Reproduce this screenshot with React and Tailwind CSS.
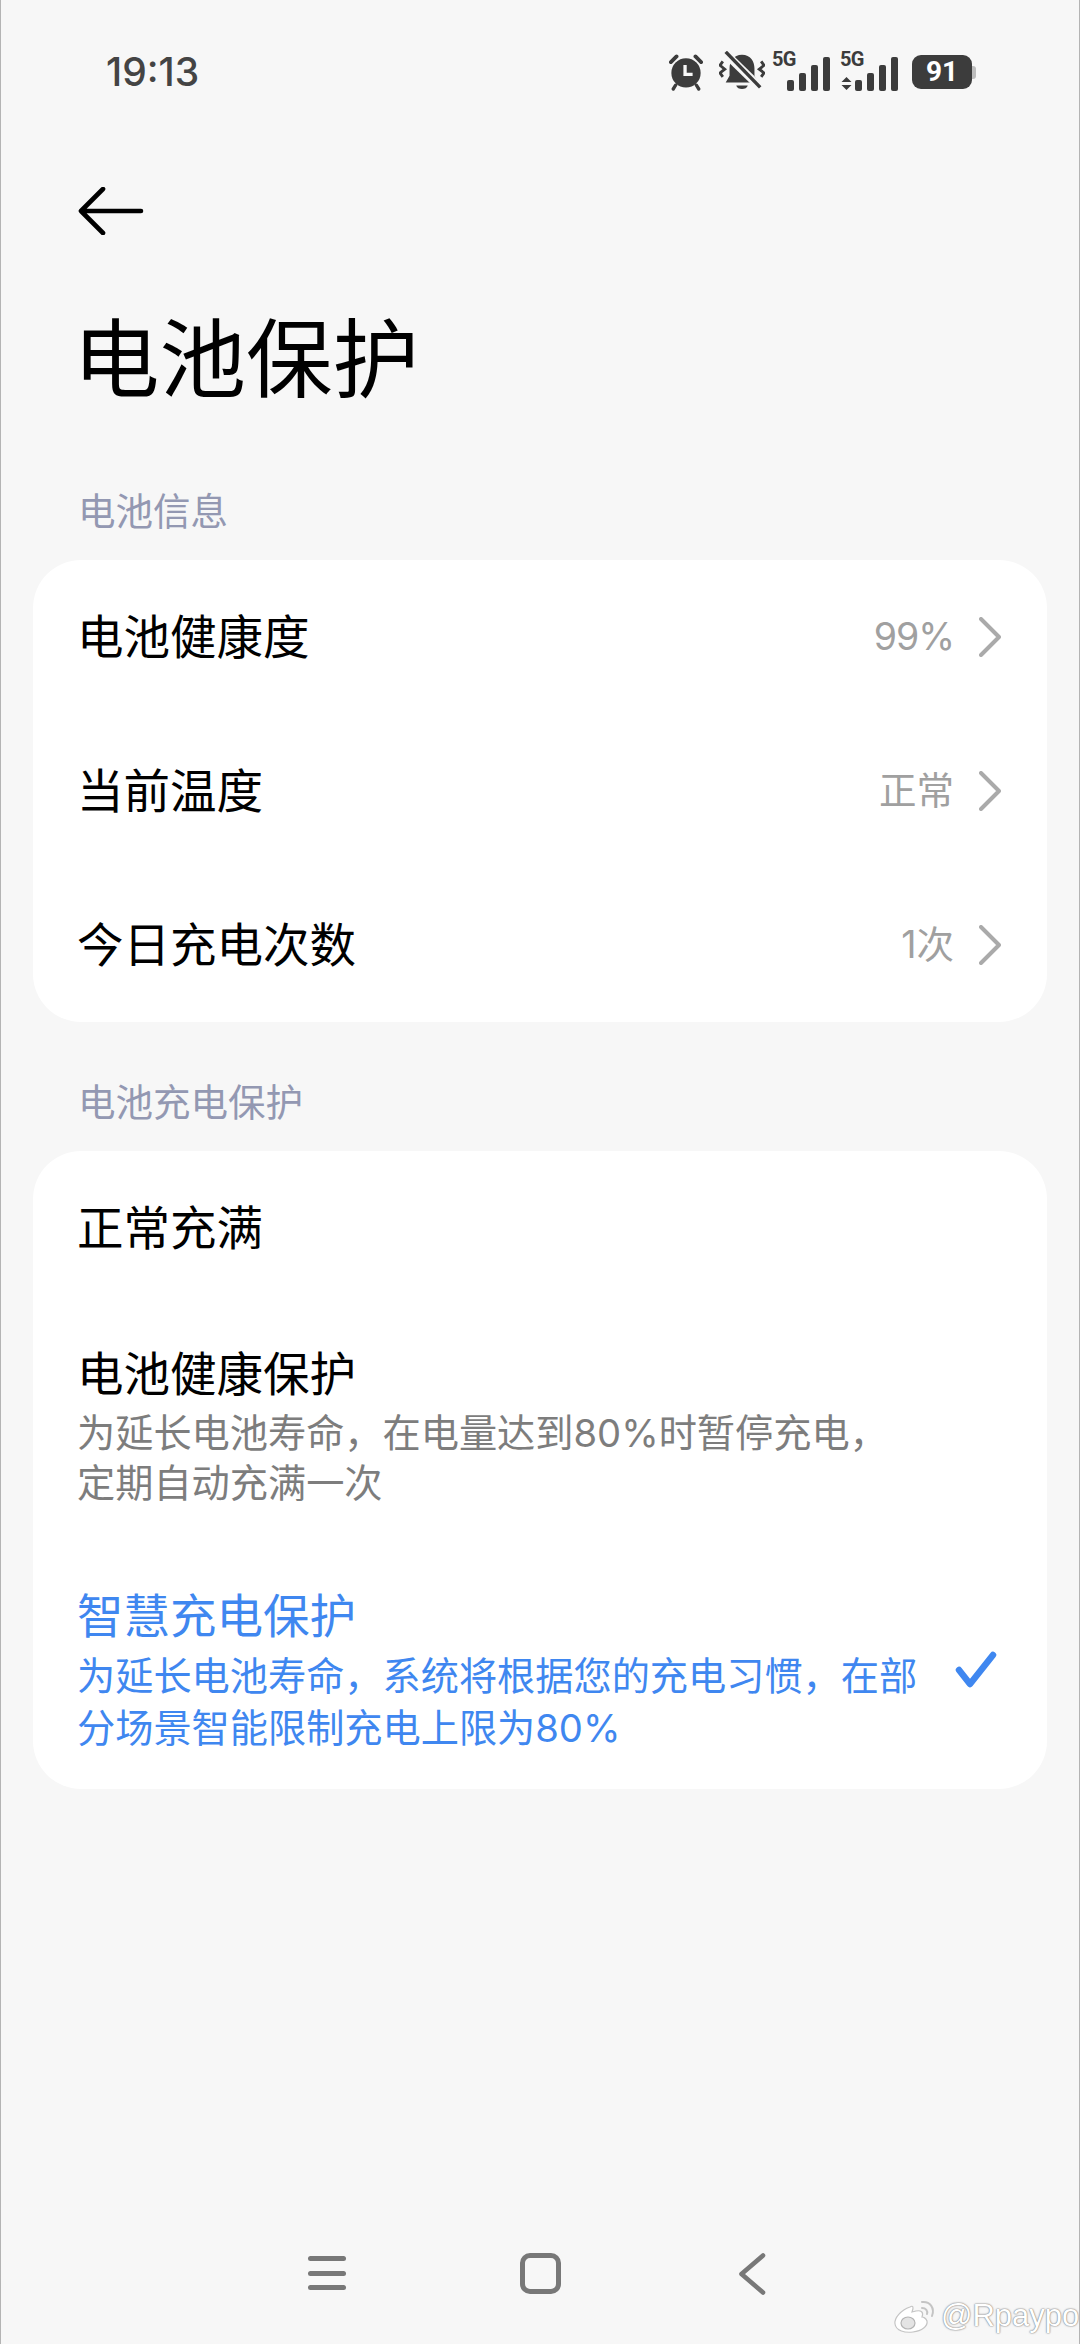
const FONT = "font-['Inter','Noto_Sans_CJK_SC',sans-serif]";

function Alarm() {
  return (
    <svg width="34" height="38" viewBox="0 0 36 40" className="text-[#3c3c3c]">
      <circle cx="18" cy="21" r="15.5" fill="currentColor" />
      <path d="M2 9.5 L8 3.5 M28 3.5 L34 9.5" stroke="currentColor" strokeWidth="4" strokeLinecap="round" />
      <path d="M7 34 L4.5 38 M29 34 L31.5 38" stroke="currentColor" strokeWidth="3.5" strokeLinecap="round" />
      <path d="M17 12.5 V22.5 H25" fill="none" stroke="#f7f7f7" strokeWidth="3.5" />
    </svg>
  );
}

function MutedBell() {
  return (
    <svg width="46" height="42" viewBox="0 0 48 42" className="text-[#3c3c3c]">
      <path d="M24 3 C15 3 11 10 11 17 V25 L7 32 H41 L37 25 V17 C37 10 33 3 24 3Z" fill="currentColor" />
      <path d="M18 35 H30 C29 40 19 40 18 35Z" fill="currentColor" />
      <path d="M6 1 L43 37" stroke="#f7f7f7" strokeWidth="8.5" />
      <path d="M7 0 L43 37" stroke="currentColor" strokeWidth="3.6" />
      <path d="M4 10 L1 14 L6 18 L1 22 L4 26 M44 10 L47 14 L42 18 L47 22 L44 26" fill="none" stroke="currentColor" strokeWidth="3" />
    </svg>
  );
}

function Signal({ arrows, className }) {
  return (
    <div className={`relative w-[58px] h-[38px] ${className}`}>
      <span className="absolute left-0 top-[-4px] text-[20px] leading-[20px] font-bold tracking-[-0.6px] text-[#3c3c3c] font-['Roboto',sans-serif]">5G</span>
      <div className="absolute right-0 bottom-0 flex items-end gap-[5px]">
        <div className="w-[7px] h-[11px] rounded-[2px] bg-[#3c3c3c]" />
        <div className="w-[7px] h-[18px] rounded-[2px] bg-[#3c3c3c]" />
        <div className="w-[7px] h-[26px] rounded-[2px] bg-[#3c3c3c]" />
        <div className="w-[7px] h-[34px] rounded-[2px] bg-[#3c3c3c]" />
      </div>
      {arrows && (
        <svg width="11" height="13" viewBox="0 0 11 13" className="absolute left-[1px] bottom-[1px] text-[#3c3c3c]">
          <path d="M5.5 0 L10.5 5 H0.5Z M5.5 13 L10.5 8 H0.5Z" fill="currentColor" />
        </svg>
      )}
    </div>
  );
}

function StatusBar() {
  return (
    <div className="h-[144px] flex items-center justify-between pl-[105px] pr-[103px]">
      <span className="text-[39px] font-medium text-[#444444] font-['Inter',sans-serif]">19:13</span>
      <div className="flex items-center">
        <Alarm />
        <div className="ml-[16px]"><MutedBell /></div>
        <Signal className="ml-[7px]" />
        <Signal arrows className="ml-[10px]" />
        <div className="ml-[14px] flex items-center">
          <div className="w-[60px] h-[34px] rounded-[9px] bg-[#3c3c3c] text-white flex items-center justify-center text-[28px] font-bold font-['Roboto',sans-serif]">91</div>
          <div className="w-[4px] h-[13px] rounded-r-[3px] bg-[#bdbdbd]" />
        </div>
      </div>
    </div>
  );
}

function SectionLabel({ children, className }) {
  return (
    <div className={`h-[50px] leading-[50px] pl-[77px] text-[37.5px] text-[#9398b2] mb-[23px] ${className}`}>{children}</div>
  );
}

function InfoRow({ label, value, tight }) {
  return (
    <div className="h-[154px] flex items-center justify-between pl-[44px] pr-[46px]">
      <span className="text-[46.5px] leading-[56px] text-black">{label}</span>
      <div className="flex items-center">
        <span className={`text-[37.5px] text-[#a0a0a0] ${tight ? "tracking-[-1px]" : ""}`}>{value}</span>
        <svg width="22" height="40" viewBox="0 0 22 40" fill="none" stroke="#aaaaaa" strokeWidth="4" strokeLinecap="round" strokeLinejoin="round" className="ml-[25px]">
          <path d="M2 2 L20 20 L2 38" />
        </svg>
      </div>
    </div>
  );
}

export default function App() {
  return (
    <div className={`relative w-[1080px] h-[2344px] flex flex-col bg-[#f7f7f7] border-x border-[#b4b4b4] overflow-hidden ${FONT}`}>
      <StatusBar />

      <div className="h-[133px] flex items-center pl-[77px]">
        <svg width="66" height="48" viewBox="0 0 66 48" fill="none" stroke="#000" strokeWidth="4.6" strokeLinecap="round" strokeLinejoin="round">
          <path d="M3 24 H63 M25 2 L3 24 L25 46" />
        </svg>
      </div>

      <h1 className="h-[160px] leading-[166px] pl-[72px] text-[86.5px] font-normal text-black">电池保护</h1>

      <SectionLabel className="mt-[50px]">电池信息</SectionLabel>
      <div className="mx-[32px] rounded-[48px] bg-white">
        <InfoRow label="电池健康度" value="99%" tight />
        <InfoRow label="当前温度" value="正常" />
        <InfoRow label="今日充电次数" value="1次" />
      </div>

      <SectionLabel className="mt-[56px]">电池充电保护</SectionLabel>
      <div className="mx-[32px] rounded-[48px] bg-white">
        <div className="h-[154px] flex items-center pl-[44px]">
          <span className="text-[46.5px] leading-[56px] text-black">正常充满</span>
        </div>
        <div className="pl-[44px] pt-[39px] pb-[39px]">
          <div className="text-[46.5px] leading-[60px] text-black">电池健康保护</div>
          <div className="mt-[4px] text-[38.2px] leading-[50px] text-[#7d7d7d]">
            为延长电池寿命，在电量达到80%时暂停充电，<br />定期自动充满一次
          </div>
        </div>
        <div className="flex items-center justify-between pl-[44px] pr-[50px] pt-[39px] pb-[35px]">
          <div>
            <div className="text-[46.5px] leading-[60px] text-[#3f87f0]">智慧充电保护</div>
            <div className="mt-[4px] text-[38.2px] leading-[52px] text-[#3f87f0]">
              为延长电池寿命，系统将根据您的充电习惯，在部<br />分场景智能限制充电上限为80%
            </div>
          </div>
          <svg width="42" height="38" viewBox="0 0 42 38" fill="none" stroke="#3f87f0" strokeWidth="6.5" strokeLinecap="round" strokeLinejoin="round">
            <path d="M4 19 L15 33 L38 4" />
          </svg>
        </div>
      </div>

      <div className="mt-auto h-[91px] flex items-start">
        <div className="ml-[307px] mt-[2px] w-[38px] h-[36px] flex flex-col justify-between py-[1px]">
          <div className="h-[5px] rounded-full bg-[#787878]" />
          <div className="h-[5px] rounded-full bg-[#787878]" />
          <div className="h-[5px] rounded-full bg-[#787878]" />
        </div>
        <div className="ml-[174px] w-[41px] h-[41px] rounded-[10px] border-[5px] border-[#787878]" />
        <svg width="28" height="42" viewBox="0 0 28 42" fill="none" stroke="#787878" strokeWidth="4.6" strokeLinecap="round" strokeLinejoin="round" className="ml-[177px]">
          <path d="M25 2.5 L3.5 21 L25 39.5" />
        </svg>
      </div>

      {/* watermark sits over the page */}
      <div className="absolute left-[892px] top-[2298px] flex items-center">
        <svg width="46" height="36" viewBox="0 0 46 36" fill="none">
          <path d="M17 9 C8 12 1 20 2 26 C3 33 12 35 20 34 C29 33 35 28 34 23 C33 20 30 19 29 19 C31 14 28 12 23 13 L19 14 C21 9 20 7 17 9Z" fill="#fff" stroke="#c4c4c4" strokeWidth="1.2" />
          <ellipse cx="15" cy="25" rx="7" ry="6" fill="#e4e4e4" stroke="#b4b4b4" strokeWidth="1.2" />
          <path d="M29 10 C33 10 35 13 34 16 M29 4 C37 3 42 10 39 18" stroke="#c4c4c4" strokeWidth="2" strokeLinecap="round" />
        </svg>
        <span className="ml-[2px] text-[31px] leading-[36px] text-white font-['Liberation_Sans',sans-serif] [text-shadow:0_0_2px_#7a7a7a,0_0_1px_#7a7a7a]">@Rpaypo</span>
      </div>
    </div>
  );
}
